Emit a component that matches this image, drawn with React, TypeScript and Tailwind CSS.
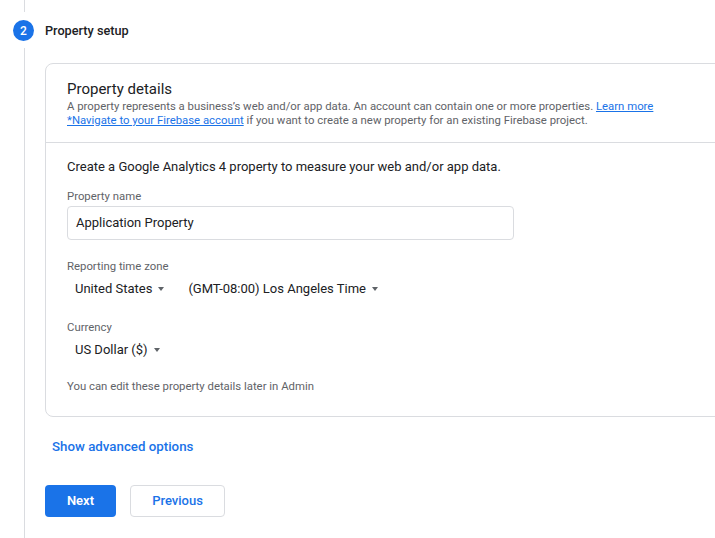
import { ReactNode } from "react";

function Caret() {
  return (
    <span className="ml-[6px] inline-block h-0 w-0 border-x-[3.5px] border-t-[4px] border-x-transparent border-t-[#5f6368]" />
  );
}

function Dropdown({ children, className = "" }: { children: ReactNode; className?: string }) {
  return (
    <button className={`flex h-[24px] items-center px-[8px] text-[13px] text-[#202124] ${className}`}>
      {children}
      <Caret />
    </button>
  );
}

function Label({ children, className = "" }: { children: ReactNode; className?: string }) {
  return <div className={`text-[11.35px] leading-[14px] text-[#5f6368] ${className}`}>{children}</div>;
}

export default function App() {
  return (
    <div className="h-[538px] w-[715px] overflow-hidden bg-white font-['Roboto',sans-serif] text-[#202124]">
      {/* Step header */}
      <div className="ml-[24px] h-[12px] w-px bg-[#dadce0]" />
      <div className="mt-[8px] flex h-[21px] items-center">
        <div className="ml-[13px] flex h-[21px] w-[21px] items-center justify-center rounded-full bg-[#1a73e8] text-[12px] font-medium text-white">
          2
        </div>
        <h2 className="ml-[11px] text-[12.7px] font-medium text-[#202124]">Property setup</h2>
      </div>

      {/* Step body */}
      <div className="ml-[24px] mt-[7px] h-[500px] border-l border-[#dadce0] pl-[20px] pt-[15px]">
        <div className="w-[700px] rounded-[8px] border border-[#dadce0]">
          <div className="border-b border-[#dadce0] px-[21px] pb-[15px] pt-[15px]">
            <h3 className="text-[15px] leading-[20px] text-[#202124]">Property details</h3>
            <p className="text-[11.35px] leading-[14px] text-[#5f6368]">
              A property represents a business’s web and/or app data. An account can contain one or more properties.{" "}
              <a className="text-[#1a73e8] underline">Learn more</a>
              <br />
              <a className="text-[#1a73e8] underline">*Navigate to your Firebase account</a> if you want to create a new
              property for an existing Firebase project.
            </p>
          </div>

          <div className="px-[21px] pb-[23px] pt-[15px]">
            <p className="text-[13px] leading-[18px] text-[#202124]">
              Create a Google Analytics 4 property to measure your web and/or app data.
            </p>

            <Label className="mt-[13px]">Property name</Label>
            <div className="mt-[3px] flex h-[34px] w-[447px] items-center rounded-[4px] border border-[#dadce0] px-[8px] text-[13px] text-[#202124]">
              Application Property
            </div>

            <Label className="mt-[19px]">Reporting time zone</Label>
            <div className="mt-[4px] flex items-center">
              <Dropdown className="mr-[8px]">United States</Dropdown>
              <Dropdown>(GMT-08:00) Los Angeles Time</Dropdown>
            </div>

            <Label className="mt-[19px]">Currency</Label>
            <div className="mt-[4px] flex">
              <Dropdown>US Dollar ($)</Dropdown>
            </div>

            <Label className="mt-[17px]">You can edit these property details later in Admin</Label>
          </div>
        </div>

        <button className="ml-[7px] mt-[21px] text-[13.3px] font-medium leading-[18px] text-[#1a73e8]">
          Show advanced options
        </button>

        <div className="mt-[27px] flex items-center gap-[14px]">
          <button className="h-[32px] w-[71px] rounded-[4px] bg-[#1a73e8] text-[13px] font-semibold text-white">
            Next
          </button>
          <button className="h-[32px] w-[95px] rounded-[4px] border border-[#dadce0] bg-white text-[13px] font-medium text-[#1a73e8]">
            Previous
          </button>
        </div>
      </div>
    </div>
  );
}
